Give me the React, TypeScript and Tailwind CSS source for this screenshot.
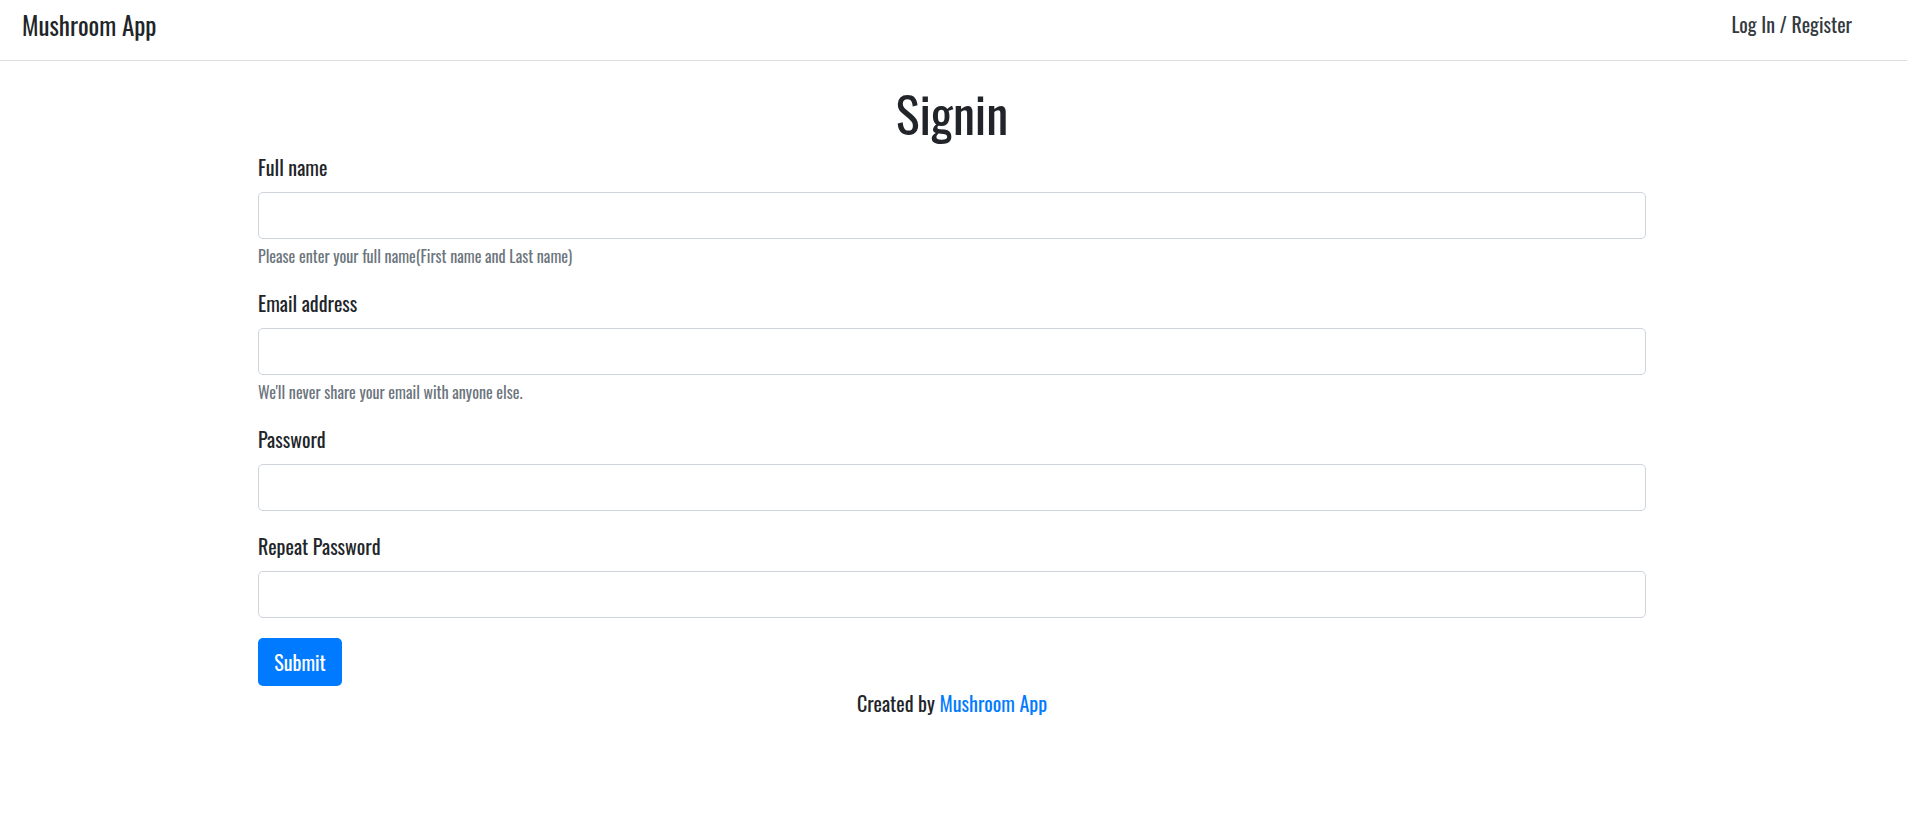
import { useState } from "react"

type FieldProps = {
  label: string
  type?: string
  help?: string
}

function Field({ label, type = "text", help }: FieldProps) {
  const [value, setValue] = useState("")
  return (
    <div className="mb-[20px]">
      <label className="mb-[10px] block text-[20px] leading-[30px] text-[#212529]">
        {label}
      </label>
      <input
        type={type}
        value={value}
        onChange={(e) => setValue(e.target.value)}
        className="block h-[47px] w-full rounded-[5px] border border-[#ced4da] px-[15px] text-[20px] outline-none focus:border-[#80bdff]"
      />
      {help && (
        <p className="mt-[5px] text-[16px] leading-[24px] text-[#6c757d]">{help}</p>
      )}
    </div>
  )
}

export default function App() {
  return (
    <div className="min-h-[837px] bg-white font-['Oswald','Roboto_Condensed',sans-serif] font-normal">
      <nav className="flex h-[61px] items-center justify-between border-b border-[#dfdfdf] pb-[12px] pl-[22px] pr-[55px]">
        <a href="#" className="text-[25px] leading-[37px] text-[#212529]">
          Mushroom App
        </a>
        <a href="#" className="text-[20px] leading-[30px] text-[#343a40]">
          Log In / Register
        </a>
      </nav>

      <div className="mx-auto w-[1391px] pr-[3px]">
        <h1 className="mt-[21px] mb-[10px] text-center text-[50px] leading-[60px] text-[#212529]">
          Signin
        </h1>

        <form onSubmit={(e) => e.preventDefault()}>
          <Field
            label="Full name"
            help="Please enter your full name(First name and Last name)"
          />
          <Field
            label="Email address"
            type="email"
            help="We'll never share your email with anyone else."
          />
          <Field label="Password" type="password" />
          <Field label="Repeat Password" type="password" />

          <button
            type="submit"
            className="h-[48px] w-[84px] rounded-[5px] bg-[#007bff] text-[20px] text-white hover:bg-[#0069d9]"
          >
            Submit
          </button>
        </form>

        <p className="mt-[2px] text-center text-[20px] leading-[30px] text-[#212529]">
          Created by{" "}
          <a href="#" className="text-[#007bff]">
            Mushroom App
          </a>
        </p>
      </div>
    </div>
  )
}
